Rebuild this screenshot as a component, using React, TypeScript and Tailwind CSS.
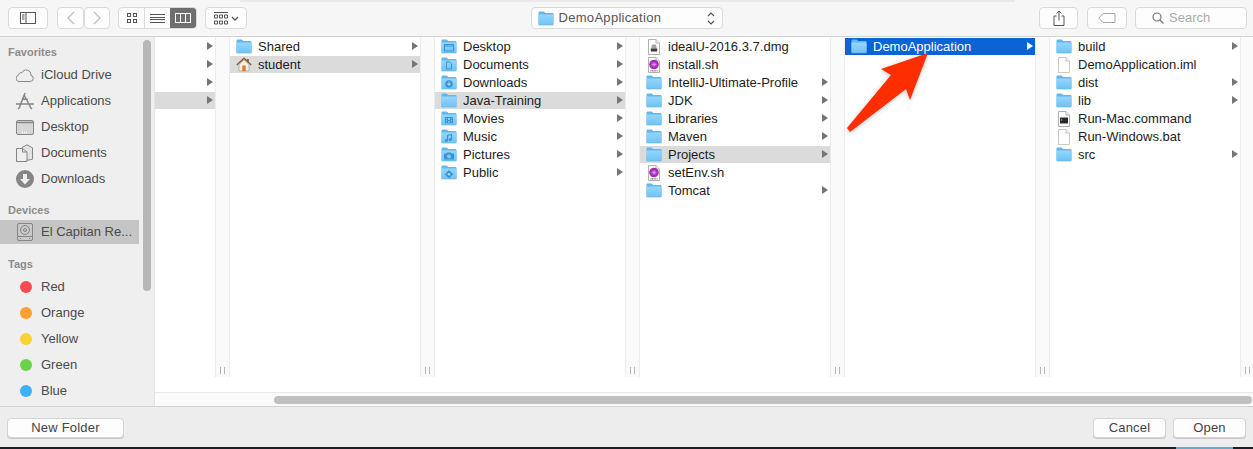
import React from 'react';

type Kind = 'folder' | 'desktop' | 'documents' | 'downloads' | 'movies' | 'music' | 'pictures' | 'public' | 'home' | 'dmg' | 'script' | 'file' | 'command';

type Row = { name: string; kind: Kind; more?: boolean; state?: 'gray' | 'blue' };

const FolderIcon = ({ glyph }: { glyph?: Kind }) => (
  <svg width="16" height="15" viewBox="0 0 16 15" className="shrink-0">
    <defs>
      <linearGradient id="folderFill" x1="0" y1="0" x2="0" y2="1">
        <stop offset="0" stopColor="#95d6fb" />
        <stop offset="1" stopColor="#6fc3f6" />
      </linearGradient>
    </defs>
    <path d="M.5 1.800C.5 1 1 .5 1.800 .5h3.400c.6 0 .9.2 1.200.6l.8 1h7c.8 0 1.300.5 1.300 1.300v9.300c0 .8-.5 1.300-1.300 1.300H1.800c-.8 0-1.300-.5-1.300-1.300z" fill="#62b8ee" />
    <path d="M.5 3.600h15v9.100c0 .8-.5 1.300-1.300 1.300H1.800c-.8 0-1.300-.5-1.300-1.300z" fill="url(#folderFill)" />
    <path d="M.5 14h15" stroke="#5fb2e6" strokeWidth=".6" />
    {glyph === 'desktop' && <g fill="none" stroke="#3a94d4"><rect x="3.500" y="5.500" width="9" height="6.500" /><path d="M3.500 7h9" /></g>}
    {glyph === 'documents' && <path d="M5.500 5h3.300l1.700 1.700V12h-5z" fill="none" stroke="#3a94d4" />}
    {glyph === 'downloads' && <g><circle cx="8" cy="9" r="3.800" fill="#3a94d4" /><path d="M8 6.800v3M6.500 8.600 8 10.300l1.500-1.700" stroke="#bfe6fb" fill="none" /></g>}
    {glyph === 'movies' && <g fill="#3a94d4"><path fillRule="evenodd" d="M4 6h8v6.200H4zM5 7v1h1V7zM5 9v1h1V9zM5 11v.6h1V11zM7 7v2h2V7zM7 10v1.500h2V10zM10 7v1h1V7zM10 9v1h1V9zM10 11v.6h1V11z" /></g>}
    {glyph === 'music' && <g stroke="#3a94d4" fill="#3a94d4"><path d="M6.500 11.500V6.500l4-1v5" fill="none" strokeWidth="1.100" /><ellipse cx="5.300" cy="11.500" rx="1.200" ry="1" /><ellipse cx="9.300" cy="10.500" rx="1.200" ry="1" /></g>}
    {glyph === 'pictures' && <g><path fillRule="evenodd" d="M3 6.500h2.500l.7-1h3.600l.7 1H13v6H3zM8 7.400a2 2 0 1 0 0 4 2 2 0 0 0 0-4z" fill="#3a94d4" /></g>}
    {glyph === 'public' && <g><path d="M8 5 12.200 9.200 8 13.400 3.800 9.200z" fill="#3a94d4" /><circle cx="8" cy="9.200" r="1.300" fill="#a9def9" /></g>}
  </svg>
);

const ItemIcon = ({ kind }: { kind: Kind }) => {
  if (kind === 'home') {
    return (
      <svg width="16" height="15" viewBox="0 0 16 15" className="shrink-0">
        <path d="M3 7.500V14h10V7.500L8 3z" fill="#f2efe9" stroke="#a89f92" strokeWidth=".7" />
        <path d="M.8 8 8 1.200 15.200 8" fill="none" stroke="#8b5a3c" strokeWidth="1.400" />
        <rect x="11" y="2" width="1.800" height="3" fill="#8b5a3c" />
        <rect x="6.300" y="8.500" width="3.400" height="5.500" fill="#e8791c" />
      </svg>
    );
  }
  if (kind === 'dmg' || kind === 'script' || kind === 'file' || kind === 'command') {
    const edge = kind === 'file' ? '#c9c9c9' : '#b0b0b0';
    return (
      <svg width="16" height="16" viewBox="0 0 16 16" className="shrink-0">
        <path d="M2.500.5h7.500l3.500 3.500v11.500h-11z" fill="#fff" stroke={edge} />
        <path d="M10 .5V4h3.500" fill="#f2f2f2" stroke={edge} />
        {kind === 'dmg' && <g><path d="M6 5.500h4l.8 4H5.200z" fill="#a5a5a5" /><rect x="4.800" y="9.500" width="6.400" height="3" fill="#3a3a3a" /></g>}
        {kind === 'script' && <g><circle cx="8" cy="7.500" r="4.800" fill="#a32cb5" /><path d="M5.500 7.500h5M8 5v5M6.200 5.700l3.600 3.600M9.800 5.700l-3.600 3.600" stroke="#e7a6ee" strokeWidth=".7" /><path d="M4.500 13.800h7" stroke="#666" strokeWidth="1.200" strokeDasharray="1 .6" /></g>}
        {kind === 'command' && <g><rect x="4" y="6.500" width="8" height="6" fill="#2a2a2a" /><path d="M5 8l1.200.8L5 9.600" stroke="#ddd" strokeWidth=".6" fill="none" /></g>}
      </svg>
    );
  }
  return <FolderIcon glyph={kind} />;
};

const Triangle = ({ white }: { white?: boolean }) => (
  <svg width="6" height="8" viewBox="0 0 6 8" className="absolute right-[2px] top-[4px]">
    <path d="M0 0 6 4 0 8z" fill={white ? '#fff' : '#757575'} />
  </svg>
);

const ColumnRow = ({ row }: { row: Row }) => {
  const bg = row.state === 'blue' ? 'bg-[#0b63d8] text-white' : row.state === 'gray' ? 'bg-[#dbdbdb] text-[#1c1c1c]' : 'text-[#1c1c1c]';
  return (
    <div className={`relative flex h-[17px] mb-px items-center pl-[6px] ${bg}`}>
      <ItemIcon kind={row.kind} />
      <span className="ml-[6px] whitespace-nowrap text-[13px] leading-[17px]">{row.name}</span>
      {row.more && <Triangle white={row.state === 'blue'} />}
    </div>
  );
};

const Strip = () => (
  <div className="relative h-[340px] w-[15px] shrink-0 border-x border-[#ececec] bg-[#fafafa]">
    <div className="absolute bottom-[3px] left-[4px] flex gap-[3px]">
      <div className="h-[7px] w-px bg-[#b5b5b5]" />
      <div className="h-[7px] w-px bg-[#b5b5b5]" />
    </div>
  </div>
);

const Column = ({ rows }: { rows: Row[] }) => (
  <div className="h-[340px] w-[190px] shrink-0 pt-px">
    {rows.map((r) => (
      <ColumnRow key={r.name} row={r} />
    ))}
  </div>
);

const col1: Row[] = [
  { name: 'Shared', kind: 'folder', more: true },
  { name: 'student', kind: 'home', more: true, state: 'gray' },
];
const col2: Row[] = [
  { name: 'Desktop', kind: 'desktop', more: true },
  { name: 'Documents', kind: 'documents', more: true },
  { name: 'Downloads', kind: 'downloads', more: true },
  { name: 'Java-Training', kind: 'folder', more: true, state: 'gray' },
  { name: 'Movies', kind: 'movies', more: true },
  { name: 'Music', kind: 'music', more: true },
  { name: 'Pictures', kind: 'pictures', more: true },
  { name: 'Public', kind: 'public', more: true },
];
const col3: Row[] = [
  { name: 'idealU-2016.3.7.dmg', kind: 'dmg' },
  { name: 'install.sh', kind: 'script' },
  { name: 'IntelliJ-Ultimate-Profile', kind: 'folder', more: true },
  { name: 'JDK', kind: 'folder', more: true },
  { name: 'Libraries', kind: 'folder', more: true },
  { name: 'Maven', kind: 'folder', more: true },
  { name: 'Projects', kind: 'folder', more: true, state: 'gray' },
  { name: 'setEnv.sh', kind: 'script' },
  { name: 'Tomcat', kind: 'folder', more: true },
];
const col4: Row[] = [{ name: 'DemoApplication', kind: 'folder', more: true, state: 'blue' }];
const col5: Row[] = [
  { name: 'build', kind: 'folder', more: true },
  { name: 'DemoApplication.iml', kind: 'file' },
  { name: 'dist', kind: 'folder', more: true },
  { name: 'lib', kind: 'folder', more: true },
  { name: 'Run-Mac.command', kind: 'command' },
  { name: 'Run-Windows.bat', kind: 'file' },
  { name: 'src', kind: 'folder', more: true },
];

const gray = '#868686';

const SideIcon = ({ name }: { name: string }) => {
  switch (name) {
    case 'iCloud Drive':
      return (
        <svg width="18" height="14" viewBox="0 0 18 14">
          <path d="M4 13.500h10.200a3.200 3.200 0 0 0 .6-6.300 4.700 4.700 0 0 0-8.900-2.500 2.700 2.700 0 0 0-3.400 2.500A3.200 3.200 0 0 0 4 13.500z" fill="none" stroke={gray} />
        </svg>
      );
    case 'Applications':
      return (
        <svg width="18" height="18" viewBox="0 0 18 18">
          <path d="M9 1 3.500 15M8 3l6.500 12M0 12h18M6 7l6 .5" fill="none" stroke={gray} strokeWidth="1.500" />
          <path d="M2 17l2-2M16 17l-2-2" stroke={gray} strokeWidth="1.500" />
        </svg>
      );
    case 'Desktop':
      return (
        <svg width="18" height="15" viewBox="0 0 18 15">
          <rect x=".5" y=".5" width="17" height="14" rx="1.500" fill="#d6d6d6" stroke={gray} />
          <path d="M1 2.500h16" stroke={gray} strokeWidth="1.500" />
          <path d="M6 12.500h6" stroke="#fff" strokeDasharray="1 1" strokeWidth="1.500" />
        </svg>
      );
    case 'Documents':
      return (
        <svg width="17" height="18" viewBox="0 0 17 18">
          <path d="M6 3.500 11 .8l5.500 3v11.500l-5 1z" fill="#e3e3e3" stroke={gray} />
          <path d="M.5 4.500h6l4.500 3.500v9.500H.5z" fill="#efefef" stroke={gray} />
          <path d="M6.500 4.500V8H11" fill="none" stroke={gray} />
        </svg>
      );
    case 'Downloads':
      return (
        <svg width="18" height="18" viewBox="0 0 18 18">
          <circle cx="9" cy="9" r="9" fill="#858585" />
          <path d="M7 4h4v5h3l-5 5.500L4 9h3z" fill="#efefef" />
        </svg>
      );
    default:
      return (
        <svg width="16" height="18" viewBox="0 0 16 18">
          <rect x=".5" y=".5" width="15" height="17" rx="1.500" fill="#c9c9c9" stroke={gray} />
          <circle cx="8" cy="7" r="4.500" fill="none" stroke={gray} />
          <circle cx="8" cy="7" r="1.500" fill="none" stroke={gray} />
          <path d="M1 13.500h14M3 15.500h1M12 15.500h1" stroke={gray} />
        </svg>
      );
  }
};

const SideItem = ({ name, active }: { name: string; active?: boolean }) => (
  <div className={`flex w-[139px] items-center ${active ? 'h-[24px] bg-[#c5c5c5]' : 'h-[26px]'}`}>
    <div className="flex w-[41px] shrink-0 justify-center pl-[11px] pr-[3px]">
      <SideIcon name={name} />
    </div>
    <span className="whitespace-nowrap text-[13px] text-[#4b4b4b]">{name}</span>
  </div>
);

const TagItem = ({ name, color }: { name: string; color: string }) => (
  <div className="flex h-[26px] items-center">
    <div className={`ml-[20px] mr-[9px] h-[12px] w-[12px] rounded-full ${color}`} />
    <span className="text-[13px] text-[#4b4b4b]">{name}</span>
  </div>
);

const SideHead = ({ children }: { children: React.ReactNode }) => (
  <div className="h-[14px] pl-[8px] text-[11px] font-bold leading-[14px] text-[#8c8c8c]">{children}</div>
);

const ToolBtn = ({ className, children }: { className: string; children?: React.ReactNode }) => (
  <div className={`flex h-[22px] items-center justify-center rounded-[4px] border border-[#dadada] bg-[#fdfdfd] ${className}`}>{children}</div>
);

const FootBtn = ({ label, width }: { label: string; width: string }) => (
  <div className={`flex h-[20px] items-center justify-center rounded-[4px] border border-[#d4d4d4] bg-[#fdfdfd] text-[13px] tracking-[0.2px] text-[#444] shadow-[0_1px_0_#c8c8c8] ${width}`}>{label}</div>
);

export default function App() {
  return (
    <div className="relative flex h-[449px] w-[1253px] flex-col overflow-hidden bg-[#1a1e27] font-['Liberation_Sans',Arial,sans-serif]">
      {/* toolbar */}
      <div className="relative grid h-[37px] shrink-0 grid-cols-[1fr_auto_1fr] items-center border-b border-[#d3d3d3] bg-[#f6f6f6] px-[6px]">
        <div className="absolute left-[240px] top-0 h-[2px] w-[775px] bg-[#e9e9e9]" />
        <div className="flex items-center">
          <ToolBtn className="ml-[2px] w-[40px]">
            <svg width="16" height="12" viewBox="0 0 16 12">
              <rect x=".5" y=".5" width="15" height="11" fill="none" stroke="#555" />
              <path d="M6 .5v11M2 3h2.500M2 5h2.500M2 7h2.500" stroke="#555" />
            </svg>
          </ToolBtn>
          <div className="ml-[9px] flex">
            <ToolBtn className="w-[27px]">
              <svg width="8" height="14" viewBox="0 0 8 14"><path d="M7 1 1 7l6 6" fill="none" stroke="#bcbcbc" strokeWidth="1.200" /></svg>
            </ToolBtn>
            <ToolBtn className="w-[26px]">
              <svg width="8" height="14" viewBox="0 0 8 14"><path d="m1 1 6 6-6 6" fill="none" stroke="#bcbcbc" strokeWidth="1.200" /></svg>
            </ToolBtn>
          </div>
          <div className="ml-[8px] flex h-[22px] w-[79px] overflow-hidden rounded-[4px] border border-[#dadada] bg-[#fdfdfd]">
            <div className="flex w-[26px] items-center justify-center border-r border-[#dadada]">
              <svg width="10" height="10" viewBox="0 0 10 10" fill="none" stroke="#555">
                <rect x=".5" y=".5" width="3" height="3" /><rect x="6.500" y=".5" width="3" height="3" />
                <rect x=".5" y="6.500" width="3" height="3" /><rect x="6.500" y="6.500" width="3" height="3" />
              </svg>
            </div>
            <div className="flex w-[25px] items-center justify-center">
              <svg width="15" height="9" viewBox="0 0 15 9" stroke="#555"><path d="M0 .5h15M0 3.500h15M0 5.500h15M0 8.500h15" /></svg>
            </div>
            <div className="flex flex-1 items-center justify-center bg-[#6e6e6e]">
              <svg width="16" height="10" viewBox="0 0 16 10" fill="none" stroke="#fff">
                <rect x=".5" y=".5" width="15" height="9" /><path d="M5.500 .5v9M10.500 .5v9" />
              </svg>
            </div>
          </div>
          <ToolBtn className="ml-[8px] w-[42px] gap-[3px]">
            <svg width="14" height="13" viewBox="0 0 14 13" fill="none" stroke="#555">
              <path d="M0 .5h14" />
              <path d="M.5 3h3v3h-3zM5.500 3h3v3h-3zM10.500 3h3v3h-3zM.5 9h3v3h-3zM5.500 9h3v3h-3zM10.500 9h3v3h-3z" />
            </svg>
            <svg width="8" height="5" viewBox="0 0 8 5"><path d="m1 1 3 3 3-3" fill="none" stroke="#555" strokeWidth="1.300" /></svg>
          </ToolBtn>
        </div>
        <ToolBtn className="w-[192px] justify-start pl-[6px] text-[13px] tracking-[0.3px] text-[#555]">
          <FolderIcon />
          <span className="ml-[5px]">DemoApplication</span>
          <svg width="8" height="13" viewBox="0 0 8 13" className="ml-auto mr-[7px]">
            <path d="m1 4 3-3 3 3M1 9l3 3 3-3" fill="none" stroke="#555" strokeWidth="1.200" />
          </svg>
        </ToolBtn>
        <div className="flex items-center justify-end">
          <ToolBtn className="w-[39px]">
            <svg width="12" height="16" viewBox="0 0 12 16" fill="none" stroke="#555">
              <path d="M3.500 6H1v9.500h10V6H8.500M6 10.500V1M3.500 3.500 6 1l2.500 2.500" />
            </svg>
          </ToolBtn>
          <ToolBtn className="ml-[9px] w-[40px]">
            <svg width="18" height="10" viewBox="0 0 18 10" fill="none" stroke="#a8a8a8">
              <path d="M5 .5h12v9H5L.8 5z" />
            </svg>
          </ToolBtn>
          <ToolBtn className="ml-[8px] w-[112px] justify-start pl-[16px] text-[13px] text-[#aaa]">
            <svg width="12" height="12" viewBox="0 0 12 12" fill="none" stroke="#777" strokeWidth="1.200">
              <circle cx="5" cy="5" r="4" /><path d="m8 8 3.500 3.500" />
            </svg>
            <span className="ml-[5px]">Search</span>
          </ToolBtn>
        </div>
      </div>

      {/* body */}
      <div className="flex h-[370px] shrink-0 border-b border-[#d3d3d3]">
        <aside className="relative h-full w-[155px] shrink-0 overflow-hidden border-r border-[#e4e4e4] bg-[#efefef] pt-[8px]">
          <SideHead>Favorites</SideHead>
          <div className="mt-[3px]">
            <SideItem name="iCloud Drive" />
            <SideItem name="Applications" />
            <SideItem name="Desktop" />
            <SideItem name="Documents" />
            <SideItem name="Downloads" />
          </div>
          <div className="mt-[11px]"><SideHead>Devices</SideHead></div>
          <div className="mt-[3px]"><SideItem name="El Capitan Re..." active /></div>
          <div className="mt-[13px]"><SideHead>Tags</SideHead></div>
          <div className="mt-[3px]">
            <TagItem name="Red" color="bg-[#fb4a50]" />
            <TagItem name="Orange" color="bg-[#fc9f2f]" />
            <TagItem name="Yellow" color="bg-[#f9d331]" />
            <TagItem name="Green" color="bg-[#69d448]" />
            <TagItem name="Blue" color="bg-[#3fb0fb]" />
          </div>
          <div className="absolute left-[143px] top-[3px] h-[251px] w-[8px] rounded-full bg-[#b7b7b7]" />
        </aside>
        <div className="flex min-w-0 flex-1 flex-col bg-white">
          <div className="flex h-[355px] overflow-hidden">
            <div className="h-[340px] w-[60px] shrink-0 pt-px">
              {[0, 1, 2, 3].map((i) => (
                <div key={i} className={`relative mb-px h-[17px] ${i === 3 ? 'bg-[#dbdbdb]' : ''}`}>
                  <Triangle />
                </div>
              ))}
            </div>
            <Strip />
            <Column rows={col1} />
            <Strip />
            <Column rows={col2} />
            <Strip />
            <Column rows={col3} />
            <Strip />
            <Column rows={col4} />
            <Strip />
            <Column rows={col5} />
            <Strip />
          </div>
          <div className="flex h-[14px] items-center border-t border-[#e8e8e8] bg-[#fafafa] pl-[119px] pr-px">
            <div className="h-[8px] flex-1 rounded-full bg-[#c0c0c0]" />
          </div>
        </div>
      </div>

      {/* footer */}
      <div className="flex h-[40px] shrink-0 items-center bg-[#ededed] px-[7px] pt-px">
        <FootBtn label="New Folder" width="w-[117px]" />
        <div className="ml-auto flex gap-[7px]">
          <FootBtn label="Cancel" width="w-[73px]" />
          <FootBtn label="Open" width="w-[73px]" />
        </div>
      </div>
      <div className="absolute bottom-0 left-[1176px] h-[2px] w-[57px] bg-[#6aa8c8]" />

      {/* red annotation arrow */}
      <svg className="pointer-events-none absolute left-0 top-0" width="1253" height="449" viewBox="0 0 1253 449">
        <path d="M928 53 881 69 891 75 847 128 850 132 906 89 910 100z" fill="#fe2e00" style={{ filter: 'drop-shadow(0 1px 2px rgba(0,0,0,.25))' }} />
      </svg>
    </div>
  );
}
